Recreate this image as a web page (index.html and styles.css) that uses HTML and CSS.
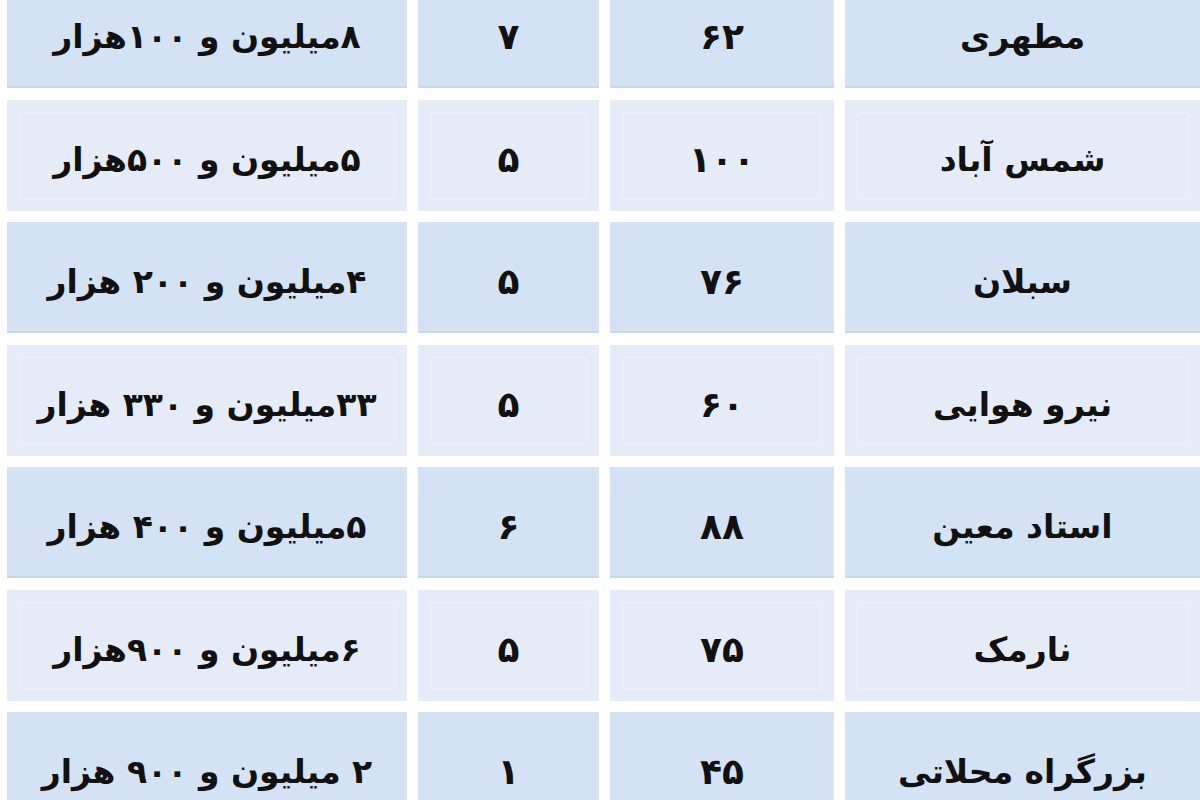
FILE: index.html
```html
<!DOCTYPE html>
<html lang="fa" dir="rtl">
<head>
<meta charset="utf-8">
<title>جدول</title>
<link rel="stylesheet" href="styles.css">
</head>
<body>
<div class="table">
  <div class="cell blue">مطهری</div>
  <div class="cell blue num">۶۲</div>
  <div class="cell blue num">۷</div>
  <div class="cell blue">۸میلیون و ۱۰۰هزار</div>

  <div class="cell light">شمس آباد</div>
  <div class="cell light num">۱۰۰</div>
  <div class="cell light num">۵</div>
  <div class="cell light">۵میلیون و ۵۰۰هزار</div>

  <div class="cell blue">سبلان</div>
  <div class="cell blue num">۷۶</div>
  <div class="cell blue num">۵</div>
  <div class="cell blue">۴میلیون و ۲۰۰ هزار</div>

  <div class="cell light">نیرو هوایی</div>
  <div class="cell light num">۶۰</div>
  <div class="cell light num">۵</div>
  <div class="cell light">۳۳میلیون و ۳۳۰ هزار</div>

  <div class="cell blue">استاد معین</div>
  <div class="cell blue num">۸۸</div>
  <div class="cell blue num">۶</div>
  <div class="cell blue">۵میلیون و ۴۰۰ هزار</div>

  <div class="cell light">نارمک</div>
  <div class="cell light num">۷۵</div>
  <div class="cell light num">۵</div>
  <div class="cell light">۶میلیون و ۹۰۰هزار</div>

  <div class="cell blue">بزرگراه محلاتی</div>
  <div class="cell blue num">۴۵</div>
  <div class="cell blue num">۱</div>
  <div class="cell blue">۲ میلیون و ۹۰۰ هزار</div>
</div>
</body>
</html>
```

FILE: styles.css
```css
html, body {
  margin: 0;
  padding: 0;
  background: #ffffff;
  overflow: hidden;
}

body {
  width: 1200px;
  height: 800px;
  font-family: "DejaVu Sans", sans-serif;
}

.table {
  display: grid;
  direction: rtl;
  grid-template-columns: 355px 224px 181px 400px;
  grid-auto-rows: 111px;
  column-gap: 11px;
  row-gap: 11.5px;
  margin-top: -23px;
  margin-left: 7px;
  width: 1193px;
}

.cell {
  display: flex;
  align-items: center;
  justify-content: center;
  font-weight: bold;
  font-size: 33px;
  color: #111111;
  padding-top: 8px;
  box-sizing: border-box;
  white-space: nowrap;
}

.num {
  font-size: 36px;
  letter-spacing: 2px;
}

.blue {
  background: #d3e3f3;
  box-shadow: inset 0 -2px 0 #c6d8ec;
}

.light {
  background: #e6ecf7;
  box-shadow: inset 0 0 0 12px #e6ecf7, inset 0 0 0 13px #edf2fa;
}
```
